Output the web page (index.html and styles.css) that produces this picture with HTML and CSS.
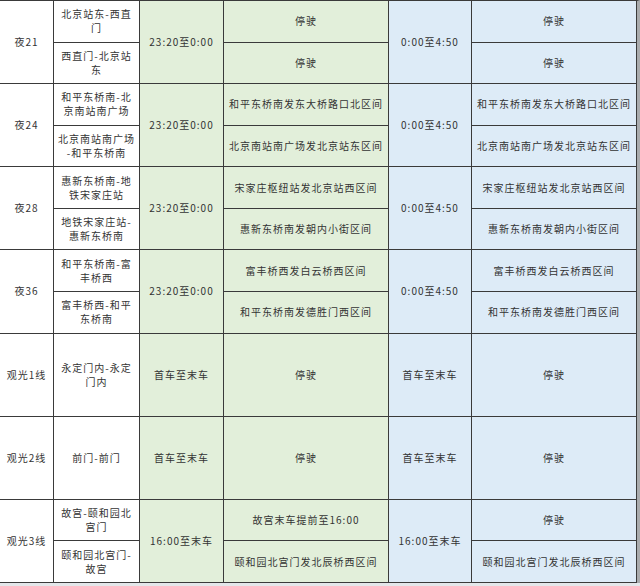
FILE: index.html
```html
<!DOCTYPE html>
<html lang="zh-CN">
<head>
<meta charset="utf-8">
<title>夜班线及观光线运营调整</title>
<link rel="stylesheet" href="styles.css">
</head>
<body>
<div class="page">
  <div class="table">
    <!-- 夜21 -->
    <div class="cell name span2">夜21</div>
    <div class="cell dir">北京站东-西直<br>门</div>
    <div class="cell green span2">23:20至0:00</div>
    <div class="cell green">停驶</div>
    <div class="cell blue span2">0:00至4:50</div>
    <div class="cell blue">停驶</div>
    <div class="cell dir">西直门-北京站<br>东</div>
    <div class="cell green">停驶</div>
    <div class="cell blue">停驶</div>

    <!-- 夜24 -->
    <div class="cell name span2">夜24</div>
    <div class="cell dir">和平东桥南-北<br>京南站南广场</div>
    <div class="cell green span2">23:20至0:00</div>
    <div class="cell green">和平东桥南发东大桥路口北区间</div>
    <div class="cell blue span2">0:00至4:50</div>
    <div class="cell blue">和平东桥南发东大桥路口北区间</div>
    <div class="cell dir">北京南站南广场<br>-和平东桥南</div>
    <div class="cell green">北京南站南广场发北京站东区间</div>
    <div class="cell blue">北京南站南广场发北京站东区间</div>

    <!-- 夜28 -->
    <div class="cell name span2">夜28</div>
    <div class="cell dir">惠新东桥南-地<br>铁宋家庄站</div>
    <div class="cell green span2">23:20至0:00</div>
    <div class="cell green">宋家庄枢纽站发北京站西区间</div>
    <div class="cell blue span2">0:00至4:50</div>
    <div class="cell blue">宋家庄枢纽站发北京站西区间</div>
    <div class="cell dir">地铁宋家庄站-<br>惠新东桥南</div>
    <div class="cell green">惠新东桥南发朝内小街区间</div>
    <div class="cell blue">惠新东桥南发朝内小街区间</div>

    <!-- 夜36 -->
    <div class="cell name span2">夜36</div>
    <div class="cell dir">和平东桥南-富<br>丰桥西</div>
    <div class="cell green span2">23:20至0:00</div>
    <div class="cell green">富丰桥西发白云桥西区间</div>
    <div class="cell blue span2">0:00至4:50</div>
    <div class="cell blue">富丰桥西发白云桥西区间</div>
    <div class="cell dir">富丰桥西-和平<br>东桥南</div>
    <div class="cell green">和平东桥南发德胜门西区间</div>
    <div class="cell blue">和平东桥南发德胜门西区间</div>

    <!-- 观光1线 -->
    <div class="cell name span2">观光1线</div>
    <div class="cell dir span2">永定门内-永定<br>门内</div>
    <div class="cell green span2">首车至末车</div>
    <div class="cell green span2">停驶</div>
    <div class="cell blue span2">首车至末车</div>
    <div class="cell blue span2">停驶</div>

    <!-- 观光2线 -->
    <div class="cell name span2">观光2线</div>
    <div class="cell dir span2">前门-前门</div>
    <div class="cell green span2">首车至末车</div>
    <div class="cell green span2">停驶</div>
    <div class="cell blue span2">首车至末车</div>
    <div class="cell blue span2">停驶</div>

    <!-- 观光3线 -->
    <div class="cell name span2">观光3线</div>
    <div class="cell dir">故宫-颐和园北<br>宫门</div>
    <div class="cell green span2">16:00至末车</div>
    <div class="cell green">故宫末车提前至16:00</div>
    <div class="cell blue span2">16:00至末车</div>
    <div class="cell blue">停驶</div>
    <div class="cell dir">颐和园北宫门-<br>故宫</div>
    <div class="cell green">颐和园北宫门发北辰桥西区间</div>
    <div class="cell blue">颐和园北宫门发北辰桥西区间</div>
  </div>
</div>
</body>
</html>
```

FILE: styles.css
```css
* {
  box-sizing: border-box;
}

html, body {
  margin: 0;
  padding: 0;
  background: #e4e7ea;
}

.page {
  width: 640px;
  height: 586px;
  display: flex;
  align-items: flex-start;
  background: #e4e7ea;
}

.table {
  width: 640px;
  height: 583px;
  display: grid;
  grid-template-columns: 54px 86px 84px 165px 83px 165px;
  grid-template-rows: repeat(14, 1fr);
  border-top: 1px solid #3a3a3a;
  border-right: 3px solid #a9abad;
  background: #ffffff;
  font-family: "Noto Sans CJK SC", "Noto Sans", sans-serif;
  font-size: 10px;
  letter-spacing: 1px;
  line-height: 14px;
  color: #333333;
}

.cell {
  display: flex;
  align-items: center;
  justify-content: center;
  text-align: center;
  padding: 0 3px;
  border-right: 1px solid #3a3a3a;
  border-bottom: 1px solid #3a3a3a;
  min-width: 0;
}

.span2 {
  grid-row: span 2;
}

.name {
  background: #ffffff;
}

.dir {
  background: #ffffff;
  white-space: nowrap;
}

.green {
  background: #e2efda;
}

.blue {
  background: #ddebf7;
}
```
